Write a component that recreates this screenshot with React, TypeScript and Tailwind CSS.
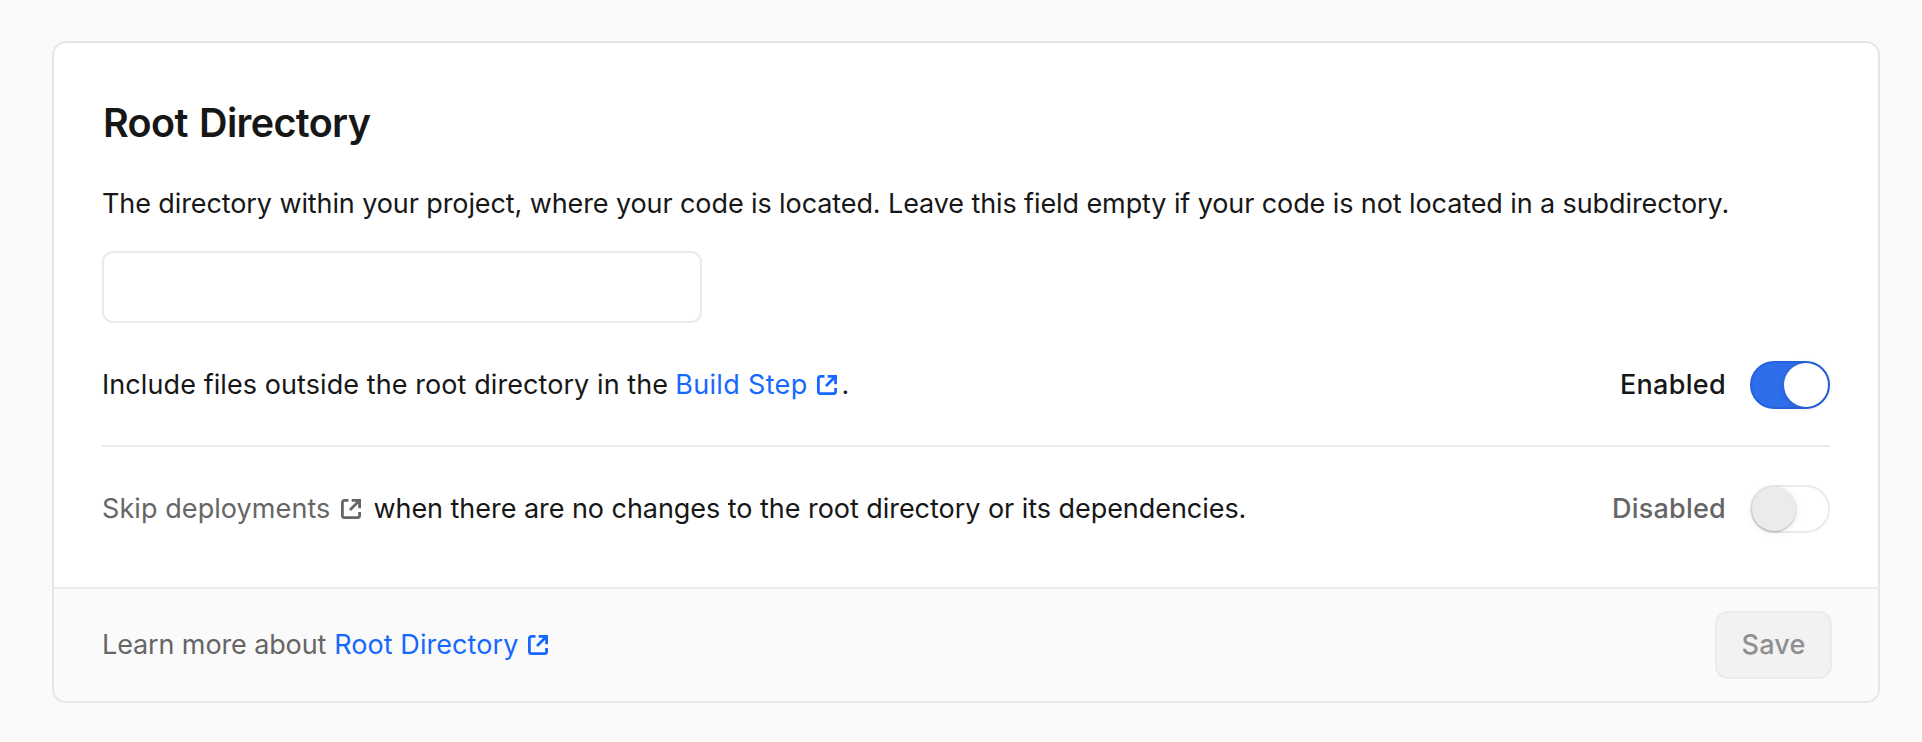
function ExternalIcon({ className = "" }: { className?: string }) {
  return (
    <svg viewBox="0 0 20 20" fill="none" stroke="currentColor" strokeWidth="2.8" className={`size-5 shrink-0 ${className}`}>
      <path d="M7.5 1.4H3.4a2 2 0 0 0-2 2v13.2a2 2 0 0 0 2 2h13.2a2 2 0 0 0 2-2V13" />
      <path d="M10.7 1.4h7.9v7.9M18.2 1.8L9 11" />
    </svg>
  );
}

function Toggle({ on }: { on: boolean }) {
  return on ? (
    <button role="switch" aria-checked="true" className="flex h-12 w-20 items-center justify-end rounded-full border-2 border-[#2563dc] bg-[#2e6eea]">
      <span className="size-11 rounded-full bg-white shadow-[0_1px_6px_rgba(0,0,0,0.14)]" />
    </button>
  ) : (
    <button role="switch" aria-checked="false" className="flex h-12 w-20 items-center justify-start rounded-full border-2 border-[#ebebeb] bg-white">
      <span className="size-11 rounded-full bg-[#ebebeb] shadow-[0_1px_2px_rgba(0,0,0,0.26),0_1px_8px_rgba(0,0,0,0.08)]" />
    </button>
  );
}

export default function App() {
  return (
    <main className="h-[742px] bg-[#fafafa] pt-[41px] pl-[52px] font-['Inter',sans-serif] text-[27px] leading-10 text-[#171717]">
      <section className="flex h-[662px] w-[1828px] flex-col overflow-hidden rounded-[14px] border-2 border-[#e6e6e6] bg-white">
        <div className="flex-1 px-12 pt-12">
          <h2 className="mt-1 ml-px text-[39.5px] leading-[56px] font-semibold tracking-[-0.65px] [word-spacing:2px]">Root Directory</h2>
          <p className="mt-[33px] whitespace-nowrap tracking-[-0.1px]">
            The directory within your project, where your code is located. Leave this field empty if your code is not located in a subdirectory.
          </p>
          <input aria-label="Root directory" className="mt-[27px] block h-[72px] w-[600px] rounded-[11px] border-2 border-[#eaeaea] bg-white px-6 outline-none" />
          <div className="mt-[38px] flex h-12 w-[1728px] items-center justify-between">
            <div className="flex items-center">
              <span className="tracking-[0.08px]">Include files outside the root directory in the</span>
              <a className="ml-[7px] flex items-center text-[#1668ff]">
                <span className="tracking-[0.34px]">Build Step</span>
                <ExternalIcon className="ml-[9px]" />
              </a>
              <span className="ml-[5px]">.</span>
            </div>
            <div className="flex items-center gap-6 font-medium">
              <span className="tracking-[0.3px]">Enabled</span>
              <Toggle on />
            </div>
          </div>
          <hr className="mt-9 w-[1728px] border-t-2 border-[#eaeaea]" />
          <div className="mt-[38px] flex h-12 w-[1728px] items-center justify-between">
            <div className="flex items-center">
              <a className="flex items-center text-[#666666]">
                <span className="tracking-[0.08px]">Skip deployments</span>
                <ExternalIcon className="ml-[11px]" />
              </a>
              <span className="ml-3 tracking-[-0.045px]">when there are no changes to the root directory or its dependencies.</span>
            </div>
            <div className="flex items-center gap-6 font-medium text-[#666666]">
              <span className="tracking-[0.22px]">Disabled</span>
              <Toggle on={false} />
            </div>
          </div>
        </div>
        <footer className="flex h-[114px] items-center justify-between border-t-2 border-[#ebebeb] bg-[#fafafa] pr-[46px] pl-12">
          <div className="flex items-center text-[#666666]">
            <span className="tracking-[-0.12px]">Learn more about</span>
            <a className="ml-2 flex items-center text-[#1668ff]">
              <span className="tracking-[0.07px]">Root Directory</span>
              <ExternalIcon className="ml-[10px]" />
            </a>
          </div>
          <button disabled className="h-[68px] w-[117px] rounded-[13px] border-2 border-[#ebebeb] bg-[#f2f2f2] font-medium tracking-[0.2px] text-[#8f8f8f]">
            Save
          </button>
        </footer>
      </section>
    </main>
  );
}
